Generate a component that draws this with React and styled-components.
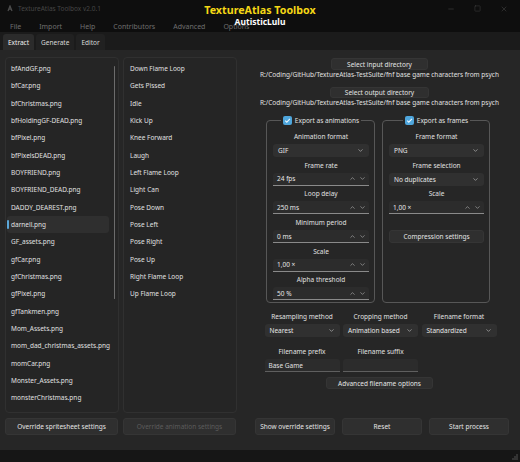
import React from "react"
import styled, { createGlobalStyle } from "styled-components"
import { ChevronDown, ChevronUp, Minus, Square, X } from "lucide-react"

const GlobalStyle = createGlobalStyle`
  html, body {
    margin: 0;
    padding: 0;
    background: #262626;
  }
  body {
    font-family: "Noto Sans", "Open Sans", sans-serif;
    color: #e0e0e0;
    font-size: 6.5px;
  }
  #root {
    width: 520px;
    height: 462px;
    overflow: hidden;
  }
  * {
    box-sizing: border-box;
  }
`

const Window = styled.div`
  display: flex;
  flex-direction: column;
  width: 520px;
  height: 462px;
  background: #262626;
`

const Header = styled.header`
  position: relative;
  background: #0e0e0e;
`

const TitleBar = styled.div`
  display: flex;
  align-items: center;
  height: 17px;
  padding: 0 12px 0 7px;
`

const WindowTitle = styled.span`
  margin-left: 5px;
  color: #464646;
  font-size: 6.5px;
`

const Controls = styled.div`
  display: flex;
  align-items: center;
  gap: 19px;
  margin-left: auto;
  color: #5a5a5a;
`

const MenuBar = styled.nav`
  display: flex;
  align-items: center;
  gap: 18px;
  height: 15px;
  padding: 3px 0 0 10px;
  color: #6e6e6e;
  font-size: 7px;
`

const Brand = styled.div`
  position: absolute;
  top: 4px;
  left: 0;
  right: 0;
  text-align: center;
  pointer-events: none;
`

const BrandTitle = styled.div`
  color: #f4d716;
  font-weight: 700;
  font-size: 10.7px;
  line-height: 13px;
`

const BrandSub = styled.div`
  color: #ffffff;
  font-weight: 700;
  font-size: 8.5px;
  line-height: 10px;
`

const TabBar = styled.div`
  display: flex;
  align-items: flex-end;
  gap: 2px;
  height: 18px;
  padding-left: 3px;
  background: #1b1b1b;
`

const Tab = styled.div`
  height: 16px;
  padding: 0 5px;
  display: flex;
  align-items: center;
  border-radius: 3px 3px 0 0;
  background: ${(p) => (p.$active ? "#2b2b2b" : "#212121")};
  color: ${(p) => (p.$active ? "#f0f0f0" : "#d8d8d8")};
`

const Body = styled.main`
  flex: 1;
  display: flex;
  flex-direction: column;
  padding: 7px 10px 15px 5px;
`

const Top = styled.div`
  display: flex;
  height: 356px;
`

const Lists = styled.div`
  display: grid;
  grid-template-columns: 114px 114px;
  gap: 4px;
  width: 232px;
`

const List = styled.ul`
  position: relative;
  margin: 0;
  padding: 2px 1px 0;
  list-style: none;
  overflow: hidden;
  border: 1px solid #303030;
  border-radius: 4px;
  background: #252525;
`

const Item = styled.li`
  position: relative;
  height: 17.33px;
  line-height: 17.33px;
  padding-left: ${(p) => (p.$scroll ? "4px" : "5px")};
  font-size: 6.5px;
  white-space: nowrap;
  margin-right: ${(p) => (p.$scroll ? "8px" : "0")};
  border-radius: 3px;
  background: ${(p) => (p.$selected ? "#2f2f2f" : "transparent")};

  &::before {
    content: "";
    display: ${(p) => (p.$selected ? "block" : "none")};
    position: absolute;
    left: 0;
    top: 4px;
    width: 1.5px;
    height: 9px;
    border-radius: 1px;
    background: #5aa6d8;
  }
`

const ScrollThumb = styled.div`
  position: absolute;
  right: 3px;
  top: 8px;
  width: 1.5px;
  height: 233px;
  border-radius: 1px;
  background: #6c6c6c;
`

const Settings = styled.section`
  display: flex;
  flex-direction: column;
  align-items: center;
  width: 259px;
  margin-left: 13px;
`

const Button = styled.button`
  display: flex;
  align-items: center;
  justify-content: center;
  width: ${(p) => p.$w || "auto"};
  height: ${(p) => p.$h || "12px"};
  margin-top: ${(p) => p.$mt || "0"};
  padding: 0 2px;
  border: 1px solid #353535;
  border-radius: 3px;
  background: #2f2f2f;
  color: ${(p) => (p.disabled ? "#5c5c5c" : "#e4e4e4")};
  font-family: inherit;
  font-size: 6.5px;
  white-space: nowrap;
`

const PathText = styled.div`
  height: 10px;
  line-height: 10px;
  font-size: 6.5px;
  white-space: nowrap;
`

const Groups = styled.div`
  display: grid;
  grid-template-columns: 109px 108px;
  gap: 7px;
  margin-top: 7px;
  margin-left: -3px;
`

const GroupBox = styled.fieldset`
  margin: 0;
  height: 188px;
  padding: 7px 5px 0 6px;
  border: 1px solid #575757;
  border-radius: 4px;
  display: flex;
  flex-direction: column;
`

const Legend = styled.legend`
  display: flex;
  align-items: center;
  gap: 3px;
  margin: 0 auto;
  padding: 0 2px;
  height: 10px;
  font-size: 6.5px;
`

const Field = styled.div`
  display: flex;
  flex-direction: column;
  gap: 2px;
  margin-top: ${(p) => p.$mt || "3.7px"};
`

const Label = styled.div`
  height: 10px;
  line-height: 10px;
  text-align: center;
  white-space: nowrap;
`

const Combo = styled.div`
  display: flex;
  align-items: center;
  justify-content: space-between;
  height: 13px;
  padding: 0 5px;
  border-radius: 3px;
  background: #303030;
  color: #e6e6e6;
  white-space: nowrap;
`

const Spin = styled.div`
  display: flex;
  align-items: center;
  height: 13px;
  padding: 0 3px 0 4px;
  border-radius: 3px 3px 0 0;
  background: #2c2c2c;
  border-bottom: 1px solid #8a8a8a;
  color: #e6e6e6;
`

const Arrows = styled.span`
  display: flex;
  gap: 3px;
  margin-left: auto;
  color: #c8c8c8;
`

const LineEdit = styled.div`
  display: flex;
  align-items: center;
  height: 13px;
  padding: 0 4px;
  border-radius: 3px 3px 0 0;
  background: #2c2c2c;
  border-bottom: 1px solid #5f5f5f;
`

const Options = styled.div`
  display: grid;
  grid-template-columns: repeat(3, 75px);
  column-gap: 3.5px;
  row-gap: 2px;
  margin-top: 9px;
  margin-left: 2px;
`

const Bottom = styled.div`
  display: flex;
  margin-top: 5px;
  height: 17px;
`

const ButtonRow = styled.div`
  display: grid;
  grid-template-columns: repeat(${(p) => p.$cols}, ${(p) => p.$w});
  gap: ${(p) => p.$gap};
  margin-left: ${(p) => p.$ml || "0"};
`

const StatusBar = styled.footer`
  display: flex;
  justify-content: flex-end;
  align-items: flex-end;
  height: 12px;
  padding: 0 2px 2px 0;
  background: #161616;
`

function AppIcon() {
  return (
    <svg width="6" height="7" viewBox="0 0 6 7">
      <path d="M1 6 L3 1 L5 6 M1.8 4.2 H4.2" stroke="#4e4e4e" strokeWidth="1.2" fill="none" />
    </svg>
  )
}

function Check() {
  return (
    <svg width="9" height="9" viewBox="0 0 9 9">
      <rect x="0" y="0" width="9" height="9" rx="2" fill="#4fa6dc" />
      <path d="M2.2 4.6 L3.8 6.2 L6.9 2.8" stroke="#eaf6ff" strokeWidth="1.1" fill="none" />
    </svg>
  )
}

function Grip() {
  return (
    <svg width="6" height="6" viewBox="0 0 6 6">
      {[[5, 1], [5, 3], [3, 3], [5, 5], [3, 5], [1, 5]].map(([x, y]) => (
        <rect key={`${x}-${y}`} x={x - 0.5} y={y - 0.5} width="1" height="1" fill="#8a8a8a" />
      ))}
    </svg>
  )
}

function ComboBox({ value }) {
  return (
    <Combo>
      <span>{value}</span>
      <ChevronDown size={7} strokeWidth={2} color="#c8c8c8" />
    </Combo>
  )
}

function SpinBox({ value }) {
  return (
    <Spin>
      <span>{value}</span>
      <Arrows>
        <ChevronUp size={7} strokeWidth={1.8} />
        <ChevronDown size={7} strokeWidth={1.8} />
      </Arrows>
    </Spin>
  )
}

const spritesheets = [
  "bfAndGF.png",
  "bfCar.png",
  "bfChristmas.png",
  "bfHoldingGF-DEAD.png",
  "bfPixel.png",
  "bfPixelsDEAD.png",
  "BOYFRIEND.png",
  "BOYFRIEND_DEAD.png",
  "DADDY_DEAREST.png",
  "darnell.png",
  "GF_assets.png",
  "gfCar.png",
  "gfChristmas.png",
  "gfPixel.png",
  "gfTankmen.png",
  "Mom_Assets.png",
  "mom_dad_christmas_assets.png",
  "momCar.png",
  "Monster_Assets.png",
  "monsterChristmas.png",
  "Nene.png",
]

const animations = [
  "Down Flame Loop",
  "Gets Pissed",
  "Idle",
  "Kick Up",
  "Knee Forward",
  "Laugh",
  "Left Flame Loop",
  "Light Can",
  "Pose Down",
  "Pose Left",
  "Pose Right",
  "Pose Up",
  "Right Flame Loop",
  "Up Flame Loop",
]

const menus = ["File", "Import", "Help", "Contributors", "Advanced", "Options"]

const path = "R:/Coding/GitHub/TextureAtlas-TestSuite/fnf base game characters from psych"

function App() {
  return (
    <Window>
      <GlobalStyle />
      <Header>
        <TitleBar>
          <AppIcon />
          <WindowTitle>TextureAtlas Toolbox v2.0.1</WindowTitle>
          <Controls>
            <Minus size={8} strokeWidth={1.2} />
            <Square size={7} strokeWidth={1.2} />
            <X size={8} strokeWidth={1.2} />
          </Controls>
        </TitleBar>
        <MenuBar>
          {menus.map((m) => (
            <span key={m}>{m}</span>
          ))}
        </MenuBar>
        <Brand>
          <BrandTitle>TextureAtlas Toolbox</BrandTitle>
          <BrandSub>AutisticLulu</BrandSub>
        </Brand>
      </Header>

      <TabBar>
        <Tab $active>Extract</Tab>
        <Tab>Generate</Tab>
        <Tab>Editor</Tab>
      </TabBar>

      <Body>
        <Top>
          <Lists>
            <List>
              {spritesheets.map((name) => (
                <Item key={name} $scroll $selected={name === "darnell.png"}>
                  {name}
                </Item>
              ))}
              <ScrollThumb />
            </List>
            <List>
              {animations.map((name) => (
                <Item key={name}>{name}</Item>
              ))}
            </List>
          </Lists>

          <Settings>
            <Button $w="97px" $mt="1px">Select input directory</Button>
            <PathText>{path}</PathText>
            <Button $w="99px" $h="11px" $mt="7px">Select output directory</Button>
            <PathText>{path}</PathText>

            <Groups>
              <GroupBox>
                <Legend>
                  <Check />
                  Export as animations
                </Legend>
                <Field $mt="0">
                  <Label>Animation format</Label>
                  <ComboBox value="GIF" />
                </Field>
                <Field>
                  <Label>Frame rate</Label>
                  <SpinBox value="24 fps" />
                </Field>
                <Field>
                  <Label>Loop delay</Label>
                  <SpinBox value="250 ms" />
                </Field>
                <Field>
                  <Label>Minimum period</Label>
                  <SpinBox value="0 ms" />
                </Field>
                <Field>
                  <Label>Scale</Label>
                  <SpinBox value="1,00 ×" />
                </Field>
                <Field>
                  <Label>Alpha threshold</Label>
                  <SpinBox value="50 %" />
                </Field>
              </GroupBox>

              <GroupBox>
                <Legend>
                  <Check />
                  Export as frames
                </Legend>
                <Field $mt="0">
                  <Label>Frame format</Label>
                  <ComboBox value="PNG" />
                </Field>
                <Field>
                  <Label>Frame selection</Label>
                  <ComboBox value="No duplicates" />
                </Field>
                <Field>
                  <Label>Scale</Label>
                  <SpinBox value="1,00 ×" />
                </Field>
                <Button $h="13px" $mt="16px">Compression settings</Button>
              </GroupBox>
            </Groups>

            <Options>
              <Label>Resampling method</Label>
              <Label>Cropping method</Label>
              <Label>Filename format</Label>
              <ComboBox value="Nearest" />
              <ComboBox value="Animation based" />
              <ComboBox value="Standardized" />
              <Field $mt="8px">
                <Label>Filename prefix</Label>
                <LineEdit>Base Game</LineEdit>
              </Field>
              <Field $mt="8px">
                <Label>Filename suffix</Label>
                <LineEdit />
              </Field>
            </Options>
            <Button $w="107px" $h="12px" $mt="5px">Advanced filename options</Button>
          </Settings>
        </Top>

        <Bottom>
          <ButtonRow $cols={2} $w="113px" $gap="5px">
            <Button $h="17px">Override spritesheet settings</Button>
            <Button $h="17px" disabled>Override animation settings</Button>
          </ButtonRow>
          <ButtonRow $cols={3} $w="80px" $gap="7px" $ml="19px">
            <Button $h="17px">Show override settings</Button>
            <Button $h="17px">Reset</Button>
            <Button $h="17px">Start process</Button>
          </ButtonRow>
        </Bottom>
      </Body>

      <StatusBar>
        <Grip />
      </StatusBar>
    </Window>
  )
}

export default App
